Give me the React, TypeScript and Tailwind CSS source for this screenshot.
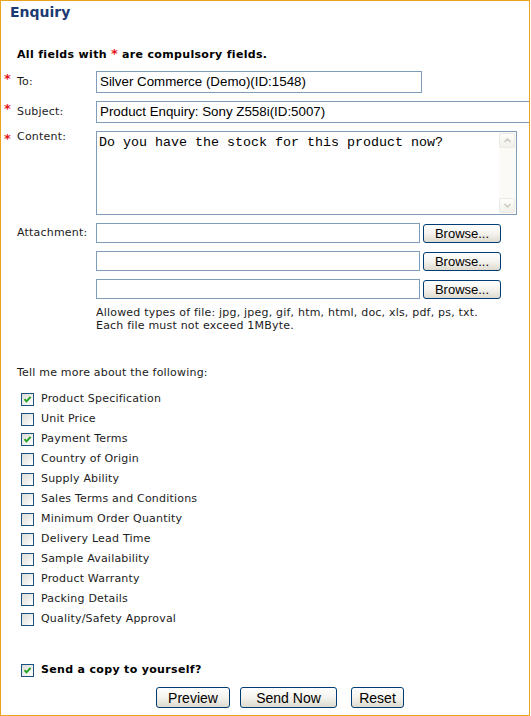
import React from "react";

const options: [string, boolean][] = [
  ["Product Specification", true],
  ["Unit Price", false],
  ["Payment Terms", true],
  ["Country of Origin", false],
  ["Supply Ability", false],
  ["Sales Terms and Conditions", false],
  ["Minimum Order Quantity", false],
  ["Delivery Lead Time", false],
  ["Sample Availability", false],
  ["Product Warranty", false],
  ["Packing Details", false],
  ["Quality/Safety Approval", false],
];

const verdana = "font-['DejaVu_Sans',Verdana,sans-serif]";
const arial = "font-['Liberation_Sans',Arial,sans-serif]";

function Star() {
  return <span className="text-[#e3151a] font-bold text-[13px] leading-none tracking-normal">*</span>;
}

function CheckBox({ checked }: { checked: boolean }) {
  return (
    <span className="w-[13px] h-[13px] border border-[#1c5180] bg-gradient-to-br from-[#dcdcd7] to-white flex items-center justify-center shrink-0">
      {checked && (
        <svg width="9" height="9" viewBox="0 0 9 9">
          <path d="M1.5 4.2 L3.5 6.3 L7.6 1.8" fill="none" stroke="#21a121" strokeWidth="1.9" />
        </svg>
      )}
    </span>
  );
}

function XpButton({ label, className = "" }: { label: string; className?: string }) {
  return (
    <button
      className={`border border-[#003c74] rounded-[3px] bg-gradient-to-b from-white via-[#f4f3ee] to-[#dedbcf] text-black leading-none tracking-normal ${arial} ${className}`}
    >
      {label}
    </button>
  );
}

function TextBox({ value = "", className = "" }: { value?: string; className?: string }) {
  return (
    <div
      className={`border border-[#7f9db9] bg-white pl-[3px] flex items-center text-[13.33px] text-black whitespace-nowrap overflow-hidden tracking-normal ${arial} ${className}`}
    >
      {value}
    </div>
  );
}

function Chevron({ up }: { up: boolean }) {
  return (
    <svg width="7" height="5" viewBox="0 0 7 5">
      <path d={up ? "M0.5 4 L3.5 1 L6.5 4" : "M0.5 1 L3.5 4 L6.5 1"} fill="none" stroke="#c9c7bb" strokeWidth="1.5" />
    </svg>
  );
}

export default function App() {
  return (
    <div className={`w-[530px] h-[716px] border border-[#eba21d] bg-white overflow-hidden text-[11px] tracking-[0.2px] text-[#1b1b1b] ${verdana}`}>
      {/* Header */}
      <h1 className="h-[22px] leading-[22px] pl-[9px] text-[14px] font-bold tracking-normal text-[#1d3b73]">Enquiry</h1>

      <p className="mt-[24px] pl-[16px] leading-[14px] font-bold tracking-[0.33px] text-black">
        All fields with <Star /> are compulsory fields.
      </p>

      {/* Form rows */}
      <div className="mt-[9px] flex h-[22px]">
        <div className="w-[95px] flex items-center">
          <span className="w-[16px] pl-[3px] -mt-[4px]"><Star /></span>
          <span>To:</span>
        </div>
        <TextBox value="Silver Commerce (Demo)(ID:1548)" className="w-[326px] h-[22px]" />
      </div>

      <div className="mt-[8px] flex h-[22px]">
        <div className="w-[95px] flex items-center shrink-0">
          <span className="w-[16px] pl-[3px] -mt-[4px]"><Star /></span>
          <span>Subject:</span>
        </div>
        <TextBox value="Product Enquiry: Sony Z558i(ID:5007)" className="w-[480px] h-[22px] shrink-0" />
      </div>

      <div className="mt-[8px] flex">
        <div className="w-[95px] flex items-start leading-[11px]">
          <span className="w-[16px] pl-[3px] mt-[1px]"><Star /></span>
          <span>Content:</span>
        </div>
        <div className="w-[421px] h-[84px] border border-[#7f9db9] bg-white flex">
          <div className="flex-1 pl-[2px] pt-[3px] leading-[16px] text-[13.33px] tracking-normal text-black font-['Liberation_Mono','Courier_New',monospace]">
            Do you have the stock for this product now?
          </div>
          <div className="w-[17px] bg-[#fbfaf6] flex flex-col justify-between py-[1px] pr-[1px]">
            <div className="h-[15px] rounded-[2px] border border-[#eceae2] bg-gradient-to-b from-[#fdfdfb] to-[#f1f0ea] flex items-center justify-center">
              <Chevron up />
            </div>
            <div className="h-[15px] rounded-[2px] border border-[#eceae2] bg-gradient-to-b from-[#fdfdfb] to-[#f1f0ea] flex items-center justify-center">
              <Chevron up={false} />
            </div>
          </div>
        </div>
      </div>

      {/* Attachments */}
      <div className="mt-[8px] flex">
        <div className="w-[95px] pl-[16px] h-[20px] flex items-center">Attachment:</div>
        <div className="flex flex-col gap-[8px]">
          {[0, 1, 2].map((i) => (
            <div key={i} className="h-[20px] flex items-center gap-[3px]">
              <TextBox className="w-[324px] h-[20px]" />
              <XpButton label="Browse..." className="w-[78px] h-[19px] text-[13px]" />
            </div>
          ))}
        </div>
      </div>

      <p className="mt-[7px] ml-[95px] leading-[13px]">
        Allowed types of file: jpg, jpeg, gif, htm, html, doc, xls, pdf, ps, txt.
        <br />
        Each file must not exceed 1MByte.
      </p>

      {/* Options */}
      <p className="mt-[34px] pl-[16px] leading-[14px]">Tell me more about the following:</p>

      <ul className="mt-[9px]">
        {options.map(([label, checked]) => (
          <li key={label} className="h-[20px] pl-[20px] flex items-center gap-[7px]">
            <CheckBox checked={checked} />
            <span>{label}</span>
          </li>
        ))}
      </ul>

      <div className="mt-[31px] h-[20px] pl-[20px] flex items-center gap-[7px]">
        <CheckBox checked />
        <span className="font-bold tracking-[0.33px] text-black">Send a copy to yourself?</span>
      </div>

      <div className="mt-[7px] pl-[155px] flex">
        <XpButton label="Preview" className="w-[74px] h-[21px] text-[14px]" />
        <XpButton label="Send Now" className="w-[97px] h-[21px] ml-[10px] text-[14px]" />
        <XpButton label="Reset" className="w-[53px] h-[21px] ml-[14px] text-[14px]" />
      </div>
    </div>
  );
}
